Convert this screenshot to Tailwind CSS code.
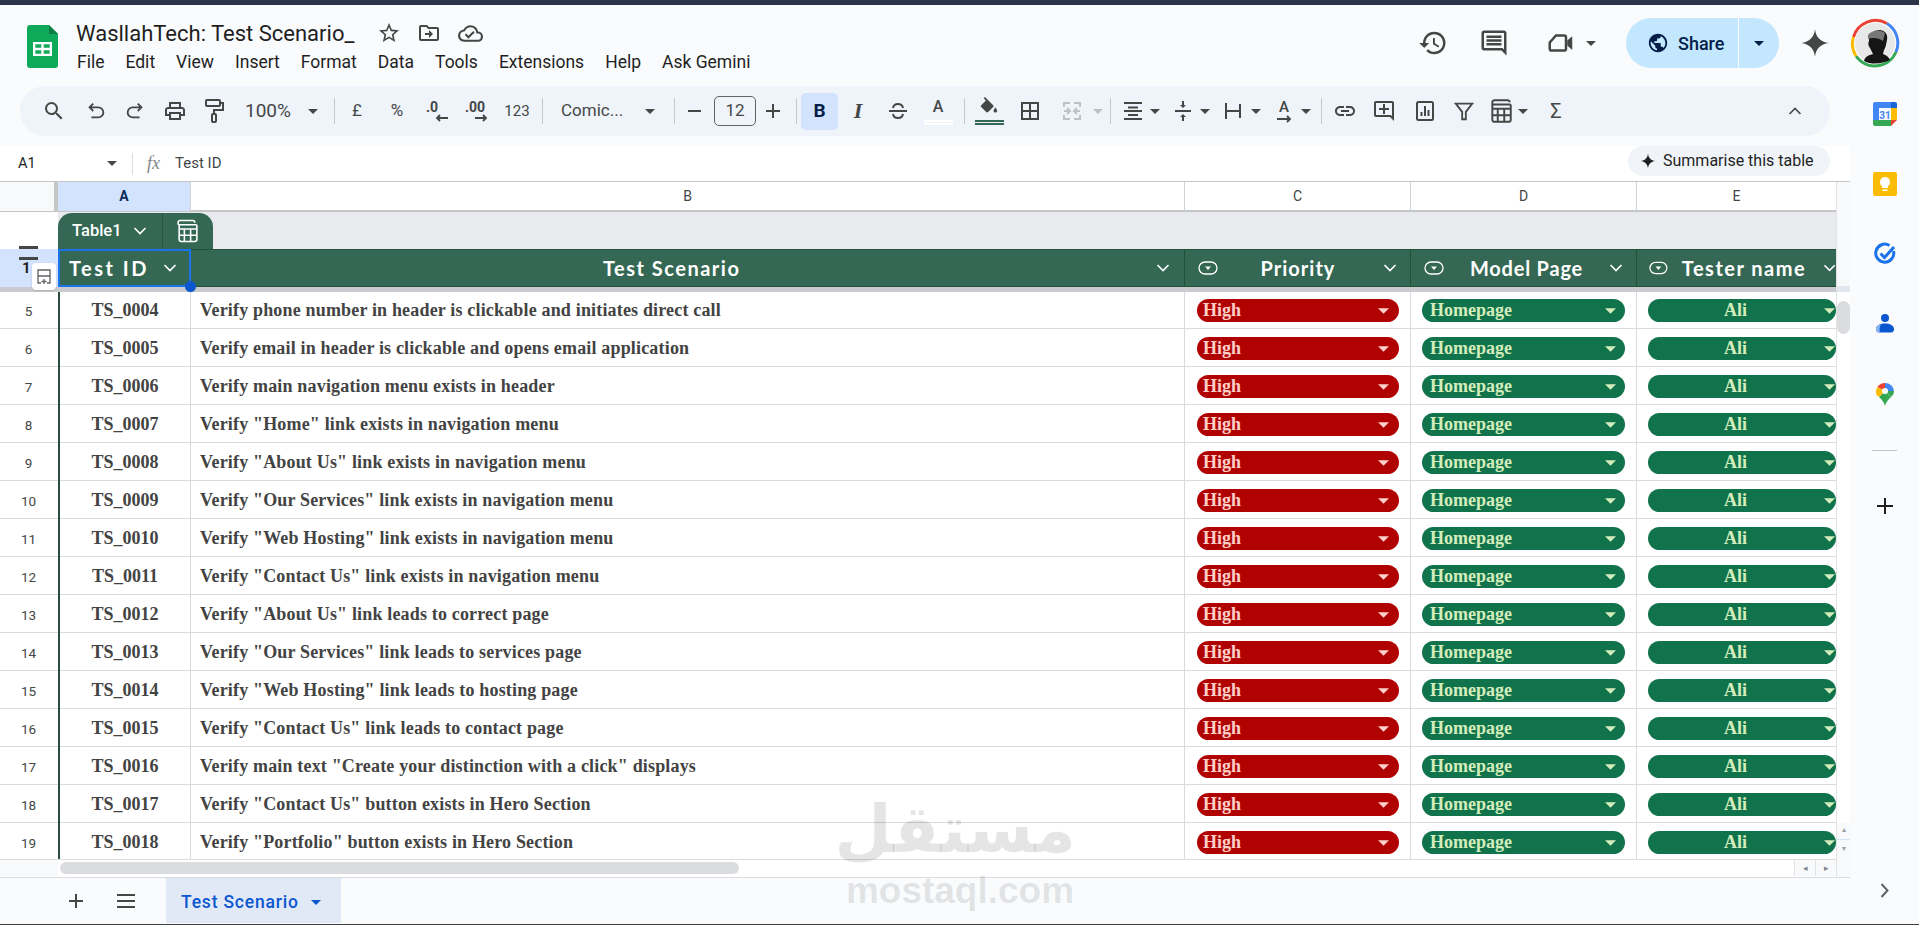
<!DOCTYPE html>
<html lang="en">

<head>
    <meta charset="UTF-8">
    <title>WasllahTech: Test Scenario_</title>
    <script src="https://cdn.jsdelivr.net/npm/@tailwindcss/browser@4"></script>
</head>

<body class="w-[1919px] h-[925px] overflow-hidden bg-[#f9fbfd] font-['Roboto',sans-serif] text-[#444746] relative">

    <svg class="hidden">
        <symbol id="caret" viewBox="0 0 10 5"><path d="M0 0h10L5 5z" fill="currentColor" /></symbol>
        <symbol id="chev" viewBox="0 0 14 8"><path d="M1.5 1l5.5 5.5L12.5 1" fill="none" stroke="currentColor" stroke-width="1.6" /></symbol>
        <symbol id="spark" viewBox="0 0 24 24"><path d="M12 1C12.8 7.5 16.5 11.2 23 12 16.5 12.8 12.8 16.5 12 23 11.2 16.5 7.5 12.8 1 12 7.5 11.2 11.2 7.5 12 1z" fill="currentColor" /></symbol>
        <symbol id="chip" viewBox="0 0 20 14"><rect x="1" y="1" width="18" height="12" rx="6" fill="none" stroke="currentColor" stroke-width="1.3" /><path d="M7 5.5h6L10 9z" fill="currentColor" /></symbol>
    </svg>

    <!-- top strip -->
    <div class="h-[5px] bg-[#2b3448]"></div>

    <!-- title + menu -->
    <header class="h-[81px] flex relative">
        <svg class="w-[31px] h-[43px] ml-[27px] mt-[20px]" viewBox="0 0 31 43">
            <path d="M3 0h19l9 9v31a3 3 0 0 1-3 3H3a3 3 0 0 1-3-3V3a3 3 0 0 1 3-3z" fill="#0fa95a" />
            <path d="M22 0l9 9h-9z" fill="#0a8044" />
            <path d="M6 17h19v14H6zm2.300 2.200v3.600h6v-3.600zm8.400 0v3.600h6v-3.600zm-8.400 6v3.600h6v-3.600zm8.400 0v3.600h6v-3.600z" fill="#fff" fill-rule="evenodd" />
        </svg>
        <div class="ml-[18px] flex flex-col">
            <div class="flex items-center h-[34px] mt-[11px]">
                <span class="text-[22px] text-[#1f1f1f] w-[280px] whitespace-nowrap">WasllahTech: Test Scenario_</span>
                <svg class="w-[24px] h-[24px] ml-[21px]" viewBox="0 0 24 24" fill="#444746"><path d="M22 9.240l-7.190-.62L12 2 9.190 8.630 2 9.240l5.460 4.730L5.820 21 12 17.270 18.180 21l-1.630-7.030L22 9.240zM12 15.400l-3.760 2.270 1-4.280-3.320-2.880 4.380-.38L12 6.100l1.710 4.040 4.380.38-3.320 2.880 1 4.280L12 15.400z" /></svg>
                <svg class="w-[24px] h-[24px] ml-[16px]" viewBox="0 0 24 24" fill="#444746"><path d="M20 6h-8l-2-2H4c-1.100 0-2 .9-2 2v12c0 1.100.9 2 2 2h16c1.100 0 2-.9 2-2V8c0-1.100-.9-2-2-2zm0 12H4V6h5.170l2 2H20v10zm-8-1l4-4-4-4v3H8v2h4v3z" /></svg>
                <svg class="w-[25px] h-[25px] ml-[17px]" viewBox="0 0 24 24" fill="#444746"><path d="M19.350 10.040A7.490 7.490 0 0 0 12 4C9.110 4 6.600 5.640 5.350 8.040A5.994 5.994 0 0 0 0 14c0 3.310 2.690 6 6 6h13c2.760 0 5-2.240 5-5 0-2.640-2.050-4.780-4.650-4.960zM19 18H6c-2.210 0-4-1.790-4-4 0-2.050 1.530-3.760 3.560-3.970l1.070-.11.5-.95A5.469 5.469 0 0 1 12 6c2.620 0 4.880 1.860 5.390 4.430l.3 1.500 1.530.11A2.980 2.980 0 0 1 22 15c0 1.650-1.350 3-3 3zm-9-3.820l-2.090-2.090L6.500 13.500 10 17l6.010-6.010-1.410-1.410z" /></svg>
            </div>
            <nav class="flex gap-[21px] text-[17.500px] text-[#1f1f1f] ml-[1px] whitespace-nowrap leading-[24px]">
                <span>File</span><span>Edit</span><span>View</span><span>Insert</span><span>Format</span><span>Data</span><span>Tools</span><span>Extensions</span><span>Help</span><span>Ask Gemini</span>
            </nav>
        </div>
        <div class="ml-auto flex items-center h-[50px] mt-[13px] pr-[19px]">
            <svg class="w-[30px] h-[30px]" viewBox="0 0 24 24" fill="#444746"><path d="M13 3a9 9 0 0 0-9 9H1l3.890 3.890.07.14L9 12H6c0-3.870 3.130-7 7-7s7 3.130 7 7-3.130 7-7 7c-1.930 0-3.680-.79-4.940-2.060l-1.420 1.420A8.954 8.954 0 0 0 13 21a9 9 0 0 0 0-18zm-1 5v5l4.280 2.540.72-1.210-3.500-2.080V8H12z" /></svg>
            <svg class="w-[30px] h-[30px] ml-[31px]" viewBox="0 0 24 24" fill="#444746"><path d="M21.990 4c0-1.100-.89-2-1.990-2H4c-1.100 0-2 .9-2 2v12c0 1.100.9 2 2 2h14l4 4-.01-18zM20 4v13.170L18.830 16H4V4h16zM6 12h12v2H6zm0-3h12v2H6zm0-3h12v2H6z" /></svg>
            <svg class="w-[30px] h-[30px] ml-[37px]" viewBox="0 0 24 24"><path d="M8 6h6.500a1.500 1.500 0 0 1 1.500 1.500v9a1.500 1.500 0 0 1-1.500 1.500h-10A1.500 1.500 0 0 1 3 16.500v-5z" fill="none" stroke="#444746" stroke-width="2" /><path d="M17 10l4-3.500v11L17 14z" fill="#444746" /></svg>
            <svg class="w-[10px] h-[5px] ml-[10px] text-[#444746]"><use href="#caret" /></svg>
            <div class="ml-[30px] w-[153px] h-[50px] rounded-full bg-[#c2e7ff] flex items-center text-[#041e49]">
                <svg class="w-[22px] h-[22px] ml-[21px]" viewBox="0 0 24 24" fill="#041e49"><path d="M12 2C6.480 2 2 6.480 2 12s4.480 10 10 10 10-4.480 10-10S17.520 2 12 2zM4 12c0-.61.08-1.210.21-1.780L8.990 15v1c0 1.100.9 2 2 2v1.930C7.060 19.430 4 16.070 4 12zm13.890 5.400c-.26-.81-1-1.400-1.900-1.400h-1v-3c0-.55-.45-1-1-1h-6v-2h2c.55 0 1-.45 1-1V7h2c1.100 0 2-.9 2-2v-.41C17.920 5.770 20 8.650 20 12c0 2.080-.81 3.980-2.110 5.400z" /></svg>
                <span class="ml-[9px] text-[18px] font-medium w-[51px] whitespace-nowrap">Share</span>
                <div class="ml-[9px] w-px h-[50px] bg-white/90"></div>
                <svg class="w-[10px] h-[5px] ml-[15px]"><use href="#caret" /></svg>
            </div>
            <svg class="w-[30px] h-[30px] ml-[21px] text-[#444746]"><use href="#spark" /></svg>
            <svg class="w-[50px] h-[50px] ml-[20px]" viewBox="0 0 50 50">
                <path d="M3.500 19A23 23 0 0 1 37 5.500" fill="none" stroke="#ea4335" stroke-width="3" />
                <path d="M37 5.500A23 23 0 0 1 46 34" fill="none" stroke="#4285f4" stroke-width="3" />
                <path d="M46 34A23 23 0 0 1 6 38" fill="none" stroke="#34a853" stroke-width="3" />
                <path d="M6 38A23 23 0 0 1 3.500 19" fill="none" stroke="#fbbc04" stroke-width="3" />
                <circle cx="25" cy="25" r="20" fill="#e8e8e8" />
                <path d="M14 43c1-5 6-6 9-7l-3-6c-2-2-2-5-1-7-1-7 5-11 11-11 6 1 8 5 7 10-1 4-1 7-3 10l-1 4c3 1 6 3 7 6-7 4-19 5-26 1z" fill="#151515" />
                <path d="M18 17c4-5 12-6 17-2l-2 8c-4-3-10-4-15-2z" fill="#777" />
            </svg>
        </div>
    </header>

    <div class="flex">
        <!-- everything left of the side panel -->
        <main class="w-[1850px] flex flex-col">
            <!-- toolbar -->
            <div class="w-[1810px] ml-[20px] h-[50px] rounded-full bg-[#eff3fa] flex items-center pl-[16px] pr-[17px] text-[#444746]">
                <button class="w-[36px] flex justify-center"><svg class="w-[24px] h-[24px]" viewBox="0 0 24 24" fill="#444746"><path d="M15.500 14h-.79l-.28-.27A6.471 6.471 0 0 0 16 9.500 6.500 6.500 0 1 0 9.500 16c1.610 0 3.090-.59 4.230-1.570l.27.28v.79l5 4.990L20.490 19l-4.990-5zm-6 0C7.010 14 5 11.990 5 9.500S7.010 5 9.500 5 14 7.010 14 9.500 11.990 14 9.500 14z" /></svg></button>
                <button class="w-[36px] ml-[6px] flex justify-center"><svg class="w-[22px] h-[22px]" viewBox="0 0 24 24" fill="none" stroke="#444746" stroke-width="2"><path d="M9 4L5 8l4 4M5 8h9.500a5.500 5.500 0 0 1 0 11H7" /></svg></button>
                <button class="w-[36px] ml-[3px] flex justify-center"><svg class="w-[22px] h-[22px]" viewBox="0 0 24 24" fill="none" stroke="#444746" stroke-width="2"><path d="M15 4l4 4-4 4M19 8H9.500a5.500 5.500 0 0 0 0 11H17" /></svg></button>
                <button class="w-[36px] ml-[4px] flex justify-center"><svg class="w-[24px] h-[24px]" viewBox="0 0 24 24" fill="#444746"><path d="M19 8h-1V3H6v5H5c-1.660 0-3 1.340-3 3v6h4v4h12v-4h4v-6c0-1.660-1.340-3-3-3zM8 5h8v3H8V5zm8 14H8v-4h8v4zm2-4v-2H6v2H4v-4c0-.55.45-1 1-1h14c.55 0 1 .45 1 1v4h-2z" /></svg></button>
                <button class="w-[36px] ml-[3px] flex justify-center"><svg class="w-[24px] h-[26px]" viewBox="0 0 24 26" fill="none" stroke="#444746" stroke-width="2"><rect x="4" y="2" width="14" height="6" rx="1" /><path d="M18 5h3v7h-9v4" /><rect x="10" y="16" width="4" height="8" rx="1" /></svg></button>
                <span class="w-[70px] ml-[1px] pl-[12px] text-[19px]">100%</span>
                <svg class="w-[10px] h-[5px] ml-[5px]"><use href="#caret" /></svg>
                <div class="w-px h-[26px] bg-[#c7c7c7] ml-[16px]"></div>
                <span class="w-[36px] ml-[4px] text-center text-[17px]">£</span>
                <span class="w-[36px] ml-[4px] text-center text-[17px]">%</span>
                <span class="w-[36px] ml-[4px] flex flex-col leading-none font-bold text-[14px] pl-[7px]">.0<svg class="w-[14px] h-[8px] ml-[9px]" viewBox="0 0 14 8" fill="none" stroke="#444746" stroke-width="1.800"><path d="M13 4H2M5 1L2 4l3 3" /></svg></span>
                <span class="w-[36px] ml-[3px] flex flex-col leading-none font-bold text-[14px] pl-[7px]">.00<svg class="w-[14px] h-[8px] ml-[9px]" viewBox="0 0 14 8" fill="none" stroke="#444746" stroke-width="1.800"><path d="M1 4h11M9 1l3 3-3 3" /></svg></span>
                <span class="w-[36px] ml-[5px] text-center text-[15px]">123</span>
                <div class="w-px h-[26px] bg-[#c7c7c7] ml-[7px]"></div>
                <span class="w-[70px] ml-[18px] text-[17px]">Comic...</span>
                <svg class="w-[10px] h-[5px] ml-[14px]"><use href="#caret" /></svg>
                <div class="w-px h-[26px] bg-[#c7c7c7] ml-[19px]"></div>
                <span class="w-[28px] ml-[5px] flex justify-center"><span class="w-[13px] h-[2px] bg-[#444746]"></span></span>
                <span class="w-[42px] h-[30px] ml-[6px] rounded-[5px] border border-[#5f6368] flex items-center justify-center text-[17px]">12</span>
                <svg class="w-[28px] h-[16px] ml-[3px]" viewBox="0 0 28 16" fill="#444746"><path d="M13 1h2v6h6v2h-6v6h-2V9H7V7h6z" /></svg>
                <div class="w-px h-[26px] bg-[#c7c7c7] ml-[9px]"></div>
                <span class="w-[37px] h-[37px] ml-[4px] rounded-[5px] bg-[#d3e3fd] flex items-center justify-center font-bold text-[19px] text-[#041e49]">B</span>
                <span class="w-[36px] ml-[2px] text-center font-['Liberation_Serif',serif] italic font-bold text-[22px] leading-none">I</span>
                <svg class="w-[36px] h-[20px] ml-[4px]" viewBox="0 0 36 20" fill="none" stroke="#444746" stroke-width="2"><path d="M9 10h18M13 7c.5-3 2.500-4 5-4s4.500 1 5 4M13 13c.5 3 2.500 4 5 4s4.500-1 5-4" /></svg>
                <span class="w-[36px] ml-[4px] flex flex-col items-center text-[16px] leading-[18px] font-medium">A<span class="w-[29px] h-[5px] mt-[4px] border-y-2 border-white"></span></span>
                <div class="w-px h-[26px] bg-[#c7c7c7] ml-[8px]"></div>
                <span class="w-[36px] ml-[6px] flex flex-col items-center"><svg class="w-[22px] h-[20px]" viewBox="0 0 24 22" fill="#444746"><path d="M16.560 8.940L7.620 0 6.210 1.410l2.380 2.380-5.150 5.150c-.59.59-.59 1.540 0 2.120l5.500 5.500c.29.29.68.44 1.060.44s.77-.15 1.060-.44l5.500-5.500c.59-.58.59-1.530 0-2.120zM19 11.500s-2 2.170-2 3.500c0 1.100.9 2 2 2s2-.9 2-2c0-1.330-2-3.500-2-3.500z" /></svg><span class="w-[29px] h-[5px] mt-[3px] border-y-2 border-[#356854]"></span></span>
                <svg class="w-[36px] h-[20px] ml-[5px]" viewBox="0 0 36 20" fill="none" stroke="#444746" stroke-width="2"><path d="M10 2h16v16H10zM18 2v16M10 10h16" /></svg>
                <svg class="w-[36px] h-[20px] ml-[6px]" viewBox="0 0 36 20" fill="none" stroke="#bdc1c6" stroke-width="2"><path d="M16 2h-6v4M10 14v4h6M20 2h6v4M26 14v4h-6M10 10h6M13 7l3 3-3 3M26 10h-6M23 7l-3 3 3 3" /></svg>
                <svg class="w-[10px] h-[5px] ml-[3px] mr-[3px] text-[#bdc1c6]"><use href="#caret" /></svg>
                <div class="w-px h-[26px] bg-[#c7c7c7] ml-[4px]"></div>
                <svg class="w-[32px] h-[20px] ml-[6px]" viewBox="0 0 32 20" fill="none" stroke="#444746" stroke-width="2"><path d="M7 2h18M11 6.500h10M7 10h18M11 14h10M7 18h18" /></svg>
                <svg class="w-[10px] h-[5px] mx-[1px]"><use href="#caret" /></svg>
                <svg class="w-[32px] h-[22px] ml-[6px]" viewBox="0 0 32 22" fill="#444746"><path d="M8 10h16v2H8z" /><path d="M16 8l-3-3h2V1h2v4h2zM16 14l3 3h-2v4h-2v-4h-2z" /></svg>
                <svg class="w-[10px] h-[5px] mx-[1px]"><use href="#caret" /></svg>
                <svg class="w-[32px] h-[20px] ml-[6px]" viewBox="0 0 32 20" fill="none" stroke="#444746" stroke-width="2"><path d="M9 2v16M9 10h14M23 3v14" /></svg>
                <svg class="w-[10px] h-[5px] ml-[2px]"><use href="#caret" /></svg>
                <span class="w-[32px] ml-[7px] flex flex-col items-center text-[15px] leading-[15px] font-medium">A<svg class="w-[16px] h-[8px]" viewBox="0 0 16 8" fill="none" stroke="#444746" stroke-width="1.800"><path d="M1 4h13M11 1l3 3-3 3" /></svg></span>
                <svg class="w-[10px] h-[5px] mx-[1px]"><use href="#caret" /></svg>
                <div class="w-px h-[26px] bg-[#c7c7c7] ml-[9px]"></div>
                <svg class="w-[24px] h-[24px] ml-[11px] mr-[6px]" viewBox="0 0 24 24" fill="#444746"><path d="M3.900 12c0-1.710 1.390-3.100 3.100-3.100h4V7H7c-2.760 0-5 2.240-5 5s2.240 5 5 5h4v-1.900H7c-1.710 0-3.100-1.390-3.100-3.100zM8 13h8v-2H8v2zm9-6h-4v1.900h4c1.710 0 3.100 1.390 3.100 3.100s-1.390 3.100-3.100 3.100h-4V17h4c2.760 0 5-2.240 5-5s-2.240-5-5-5z" /></svg>
                <svg class="w-[24px] h-[24px] ml-[9px] mr-[6px]" viewBox="0 0 24 24" fill="#444746"><path d="M20 2H4c-1.100 0-2 .9-2 2v12c0 1.100.9 2 2 2h14l4 4V4c0-1.100-.9-2-2-2zm0 15.170L18.830 16H4V4h16v13.170zM13 5h-2v4H7v2h4v4h2v-4h4V9h-4z" /></svg>
                <svg class="w-[24px] h-[24px] ml-[11px] mr-[6px]" viewBox="0 0 24 24" fill="none" stroke="#444746" stroke-width="2"><rect x="4" y="3" width="16" height="18" rx="1.500" /><path d="M8.500 17v-4M12 17V7M15.500 17v-6" /></svg>
                <svg class="w-[22px] h-[22px] ml-[10px] mr-[7px]" viewBox="0 0 24 24" fill="none" stroke="#444746" stroke-width="2"><path d="M3 4h18l-7 9v8h-4v-8z" /></svg>
                <svg class="w-[26px] h-[26px] ml-[6px] mr-[3px]" viewBox="0 0 24 24" fill="none" stroke="#444746" stroke-width="1.800"><path d="M4 6V4a2 2 0 0 1 2-2h12a2 2 0 0 1 2 2M5 6h15a1 1 0 0 1 1 1v13a2 2 0 0 1-2 2H6a2 2 0 0 1-2-2V6zM4 10h17M9 10v12M15 10v12M4 16h17" /></svg>
                <svg class="w-[10px] h-[5px] mx-[1px]"><use href="#caret" /></svg>
                <span class="w-[36px] ml-[9px] text-center text-[20px]">Σ</span>
                <svg class="w-[14px] h-[8px] ml-auto mr-[11px] rotate-180"><use href="#chev" /></svg>
            </div>

            <!-- formula bar -->
            <div class="mt-[10px] h-[35px] bg-white flex items-center pr-[20px] text-[#1f1f1f]">
                <span class="w-[107px] pl-[18px] text-[14.500px]">A1</span>
                <svg class="w-[10px] h-[5px] text-[#444746]"><use href="#caret" /></svg>
                <span class="w-px h-[22px] bg-[#dadce0] ml-[15px]"></span>
                <span class="ml-[14px] w-[26px] font-['Liberation_Serif',serif] italic text-[18px] text-[#80868b]">fx</span>
                <span class="ml-[2px] text-[15px] text-[#444746]">Test ID</span>
                <div class="ml-auto w-[202px] h-[30px] mt-[-5px] rounded-full bg-[#f0f4f9] flex items-center pl-[12px] gap-[7px] text-[16px] text-[#1f1f1f] whitespace-nowrap">
                    <svg class="w-[16px] h-[18px]"><use href="#spark" /></svg>Summarise this table
                </div>
            </div>

            <!-- grid -->
            <div class="h-[696px] bg-white flex relative border-t border-[#c4c7c5]">
                <div class="w-[1836px] flex flex-col shrink-0">
                    <!-- column letters -->
                    <div class="h-[30px] grid grid-cols-[58px_133px_994px_226px_226px_199px] text-[14px] text-center leading-[29px] border-b-2 border-[#c4c7c5]">
                        <div class="bg-[#f8f9fa] border-r-4 border-[#c4c7c5]"></div>
                        <div class="bg-[#d3e3fd] font-bold text-[#0b2d5e] border-r border-[#d0d3d6]">A</div>
                        <div class="border-r border-[#d0d3d6]">B</div>
                        <div class="border-r border-[#d0d3d6]">C</div>
                        <div class="border-r border-[#d0d3d6]">D</div>
                        <div>E</div>
                    </div>
                    <!-- table name tab -->
                    <div class="h-[37px] flex">
                        <div class="w-[58px] bg-white"></div>
                        <div class="flex-1 bg-[#e8eaed] pt-[1px]">
                            <div class="w-[155px] h-[36px] rounded-t-[14px] bg-[#356854] flex items-center text-white">
                                <span class="ml-[14px] w-[50px] text-[16.500px] font-medium">Table1</span>
                                <svg class="w-[14px] h-[8px] ml-[11px]"><use href="#chev" /></svg>
                                <span class="w-px h-full bg-[#2a5442] ml-[15px]"></span>
                                <svg class="w-[25px] h-[26px] ml-[12px]" viewBox="0 0 24 24" fill="none" stroke="#fff" stroke-width="1.500"><path d="M3 6V4a2 2 0 0 1 2-2h12a2 2 0 0 1 2 2M5 6h15a1 1 0 0 1 1 1v13a2 2 0 0 1-2 2H6a2 2 0 0 1-2-2V6zM4 10h17M9 10v12M15 10v12M4 16h17" /></svg>
                            </div>
                        </div>
                    </div>
                    <!-- table header -->
                    <div class="h-[38px] grid grid-cols-[58px_133px_994px_226px_226px_199px] font-['Lato',sans-serif] font-bold text-[20px] text-white">
                        <div class="bg-[#d3e3fd] text-[#1f1f1f] text-[15px] leading-[38px] font-['Roboto',sans-serif] font-bold pl-[22px]">1</div>
                        <div class="bg-[#356854] border-2 border-[#1a73e8] flex items-center pl-[9px] pr-[12px] justify-between relative tracking-[2.500px]">Test ID<svg class="w-[14px] h-[8px]"><use href="#chev" /></svg>
                            <span class="absolute right-[-7px] bottom-[-7px] w-[11px] h-[11px] rounded-full bg-[#0b57d0] z-20"></span>
                        </div>
                        <div class="bg-[#356854] border-y border-r border-[#24503e] flex items-center justify-between pr-[14px] tracking-[1.500px]"><span class="ml-[412px]">Test Scenario</span><svg class="w-[14px] h-[8px]"><use href="#chev" /></svg></div>
                        <div class="bg-[#356854] border-y border-r border-[#24503e] flex items-center justify-between px-[13px] tracking-[1px]"><svg class="w-[20px] h-[14px]"><use href="#chip" /></svg><span class="mr-[5px]">Priority</span><svg class="w-[14px] h-[8px]"><use href="#chev" /></svg></div>
                        <div class="bg-[#356854] border-y border-r border-[#24503e] flex items-center justify-between px-[13px] tracking-[0.800px]"><svg class="w-[20px] h-[14px]"><use href="#chip" /></svg><span>Model Page</span><svg class="w-[14px] h-[8px]"><use href="#chev" /></svg></div>
                        <div class="bg-[#356854] border-y border-[#24503e] flex items-center pl-[12px] tracking-[1.500px]"><svg class="w-[20px] h-[14px]"><use href="#chip" /></svg><span class="ml-[14px] w-[124px] text-center whitespace-nowrap">Tester name</span><svg class="w-[14px] h-[8px] ml-[17px]"><use href="#chev" /></svg></div>
                    </div>
                    <div class="h-[5px] bg-[#c9cbce] relative z-10"></div>
                    <!-- data rows -->
                    <div id="rows" class="h-[567px] overflow-hidden font-['Liberation_Serif',serif] font-bold text-[18px] text-[#434343]"></div>
                    <!-- horizontal scrollbar -->
                    <div class="h-[17px] flex items-center border-t border-[#dadce0] relative">
                        <div class="w-[58px] h-full bg-[#f8f9fa]"></div>
                        <div class="ml-[2px] w-[679px] h-[12px] rounded-full bg-[#dadce0]"></div>
                        <div class="ml-auto flex h-full text-[#80868b] text-[9px] leading-[16px] text-center">
                            <span class="w-[21px] bg-[#f8f9fa] border-l border-[#e3e3e3]">◂</span>
                            <span class="w-[21px] bg-[#f8f9fa] border-l border-[#e3e3e3]">▸</span>
                        </div>
                    </div>
                </div>
                <!-- vertical scrollbar -->
                <div class="w-[14px] flex flex-col border-l border-[#e3e3e3] text-[#9aa0a6] text-center text-[8px] leading-[14px]">
                    <div class="h-[104px] bg-[#f8f9fa]"></div>
                    <div class="h-[6px] bg-[#e1e6ef]"></div>
                    <div class="h-[9px]"></div>
                    <div class="h-[33px] rounded-full bg-[#dadce0]"></div>
                    <div class="h-[489px]"></div>
                    <div class="flex-1 bg-[#f8f9fa]">▴<div class="h-px bg-[#d3e3fd] my-[2px]"></div>▾</div>
                </div>

                <!-- table group handle + add row chip -->
                <div class="absolute left-[19px] top-[64px] w-[19px] h-[3px] bg-[#444746]"></div>
                <div class="absolute left-[19px] top-[75px] w-[19px] h-[3px] bg-[#444746]"></div>
                <div class="absolute left-[32px] top-[81px] w-[24px] h-[27px] bg-white rounded-[4px] shadow-sm z-20 flex items-center justify-center">
                    <svg class="w-[16px] h-[17px]" viewBox="0 0 16 17" fill="none" stroke="#5f6368" stroke-width="1.300"><path d="M5 15H2V2h12v13h-3M2 8h12M8 11v5M5.500 13.500h5" /></svg>
                </div>
                <!-- watermark -->
                <div class="absolute left-[844px] top-[610px] w-[232px] text-center pointer-events-none text-black/10 z-30">
                    <div class="font-['DejaVu_Sans',sans-serif] font-bold text-[66px] leading-[76px]" dir="rtl" lang="ar">مستقل</div>
                </div>
            </div>

            <!-- sheet tabs -->
            <div class="h-[46px] border-t border-[#dadce0] flex relative">
                <svg class="w-[18px] h-[18px] ml-[67px] mt-[14px]" viewBox="0 0 18 18" fill="#444746"><path d="M8 2h2v6h6v2h-6v6H8v-6H2V8h6z" /></svg>
                <svg class="w-[20px] h-[18px] ml-[31px] mt-[14px]" viewBox="0 0 20 18" fill="#444746"><path d="M1 2h18v2H1zM1 8h18v2H1zM1 14h18v2H1z" /></svg>
                <div class="ml-[30px] w-[175px] bg-[#e1e9f7] flex items-center pl-[15px] pt-[3px] text-[#0b57d0] text-[17.500px] font-medium tracking-[0.800px]">
                    Test Scenario
                    <svg class="w-[10px] h-[5px] ml-[12px]"><use href="#caret" /></svg>
                </div>
                <div class="absolute left-[844px] top-[-5px] w-[232px] text-center pointer-events-none text-black/10 font-['Liberation_Sans',sans-serif] font-bold text-[37px] leading-[36px] z-30">mostaql.com</div>
            </div>
        </main>

        <!-- side panel -->
        <aside class="w-[69px] flex flex-col items-center pt-[16px] text-[#0b57d0]">
            <svg class="w-[24px] h-[24px]" viewBox="0 0 24 24">
                <path d="M18 0H2a2 2 0 0 0-2 2v16h6V6h12z" fill="#4285f4" />
                <path d="M18 0v6h6V2a2 2 0 0 0-2-2z" fill="#1967d2" />
                <path d="M18 6h6v12h-6z" fill="#fbbc04" />
                <path d="M0 18v4a2 2 0 0 0 2 2h16v-6z" fill="#34a853" />
                <path d="M18 18v6l6-6z" fill="#ea4335" />
                <text x="12" y="16.500" text-anchor="middle" font-size="10" font-weight="700" fill="#4285f4" font-family="Roboto">31</text>
            </svg>
            <svg class="w-[24px] h-[24px] mt-[46px]" viewBox="0 0 24 24">
                <rect width="24" height="24" rx="2" fill="#fbbc04" />
                <path d="M12 5a5 5 0 0 0-3 9v2h6v-2a5 5 0 0 0-3-9zM9.500 17.500h5V19h-5z" fill="#fff" />
            </svg>
            <svg class="w-[24px] h-[24px] mt-[46px]" viewBox="0 0 24 24" fill="none">
                <path d="M20.500 9a9 9 0 1 1-4-5.500" stroke="#1a73e8" stroke-width="3" />
                <path d="M7.500 11.500l4 4L21 5" stroke="#1a73e8" stroke-width="3" />
            </svg>
            <svg class="w-[24px] h-[24px] mt-[46px]" viewBox="0 0 24 24">
                <circle cx="12" cy="6" r="4" fill="#0b57d0" />
                <path d="M12 11.500c5 0 9 2 9 5.500 0 2-1 3.500-3 3.500H6c-2 0-3-1.500-3-3.500 0-3.500 4-5.500 9-5.500z" fill="#0b57d0" />
                <path d="M3 17c0-2.500 2-4.300 5-5-1.500 3-2 6-1 8.500H6c-2 0-3-1.500-3-3.500z" fill="#8ab4f8" />
            </svg>
            <svg class="w-[22px] h-[24px] mt-[46px]" viewBox="0 0 22 24">
                <path d="M11 24c-1-4-3-6-6-9L11 9l6 6c-3 3-5 5-6 9z" fill="#34a853" />
                <path d="M2 11.500A8 8 0 0 1 3.500 5L11 9l-6 6c-1.500-1-2.500-2-3-3.500z" fill="#fbbc04" />
                <path d="M3.500 5A9 9 0 0 1 11 1v8z" fill="#ea4335" />
                <path d="M11 1a9 9 0 0 1 9 8l-9 0z" fill="#4285f4" />
                <path d="M20 9c0 3-1.500 4.500-3 6l-6-6z" fill="#34a853" />
                <circle cx="11" cy="9" r="3" fill="#fff" />
            </svg>
            <div class="w-[25px] h-px bg-[#c7c7c7] mt-[44px]"></div>
            <svg class="w-[18px] h-[18px] mt-[46px]" viewBox="0 0 18 18" fill="#1f1f1f"><path d="M8 1h2v7h7v2h-7v7H8v-7H1V8h7z" /></svg>
            <svg class="w-[9px] h-[15px] mt-[368px]" viewBox="0 0 9 15" fill="none" stroke="#5f6368" stroke-width="2"><path d="M1.500 1l6 6.500-6 6.500" /></svg>
        </aside>
    </div>

    <div class="absolute left-0 right-0 bottom-0 h-px bg-[#3c4043]"></div>

    <script>
        // rows of the sheet, row number comes from the position
        const scenarios = [
            'Verify phone number in header is clickable and initiates direct call',
            'Verify email in header is clickable and opens email application',
            'Verify main navigation menu exists in header',
            'Verify "Home" link exists in navigation menu',
            'Verify "About Us" link exists in navigation menu',
            'Verify "Our Services" link exists in navigation menu',
            'Verify "Web Hosting" link exists in navigation menu',
            'Verify "Contact Us" link exists in navigation menu',
            'Verify "About Us" link leads to correct page',
            'Verify "Our Services" link leads to services page',
            'Verify "Web Hosting" link leads to hosting page',
            'Verify "Contact Us" link leads to contact page',
            'Verify main text "Create your distinction with a click" displays',
            'Verify "Contact Us" button exists in Hero Section',
            'Verify "Portfolio" button exists in Hero Section'
        ];

        const caret = '<svg class="w-[11px] h-[6px]"><use href="#caret" /></svg>';

        document.getElementById('rows').innerHTML = scenarios.map((text, i) => `
            <div class="h-[38px] ${i === 0 ? 'mt-[-1px]' : ''} grid grid-cols-[58px_133px_994px_226px_226px_199px] border-b border-[#d9dadc]">
                <div class="font-['Roboto',sans-serif] font-normal text-[13.500px] text-[#444746] text-center pt-[2px] leading-[36px] pr-[1px]">${i + 5}</div>
                <div class="border-l-2 border-r border-l-[#2a4d3e] border-r-[#d9dadc] text-center leading-[38px]">TS_${String(i + 4).padStart(4, '0')}</div>
                <div class="border-r border-[#d9dadc] pl-[9px] leading-[38px] tracking-[0.170px]">${text}</div>
                <div class="border-r border-[#d9dadc] pl-[12px]">
                    <div class="w-[202px] h-[23px] mt-[8px] rounded-full bg-[#b10202] text-[#ffcfc9] flex items-center justify-between pl-[6px] pr-[10px]"><span>High</span>${caret}</div>
                </div>
                <div class="border-r border-[#d9dadc] pl-[11px]">
                    <div class="w-[203px] h-[23px] mt-[8px] rounded-full bg-[#11734b] text-[#d4edbc] flex items-center justify-between pl-[8px] pr-[9px]"><span>Homepage</span>${caret}</div>
                </div>
                <div class="pl-[11px]">
                    <div class="w-[188px] h-[23px] mt-[8px] rounded-full bg-[#11734b] text-[#d4edbc] flex items-center pl-[76px]"><span>Ali</span><span class="ml-[77px] flex">${caret}</span></div>
                </div>
            </div>`).join('');
    </script>

</body>

</html>
